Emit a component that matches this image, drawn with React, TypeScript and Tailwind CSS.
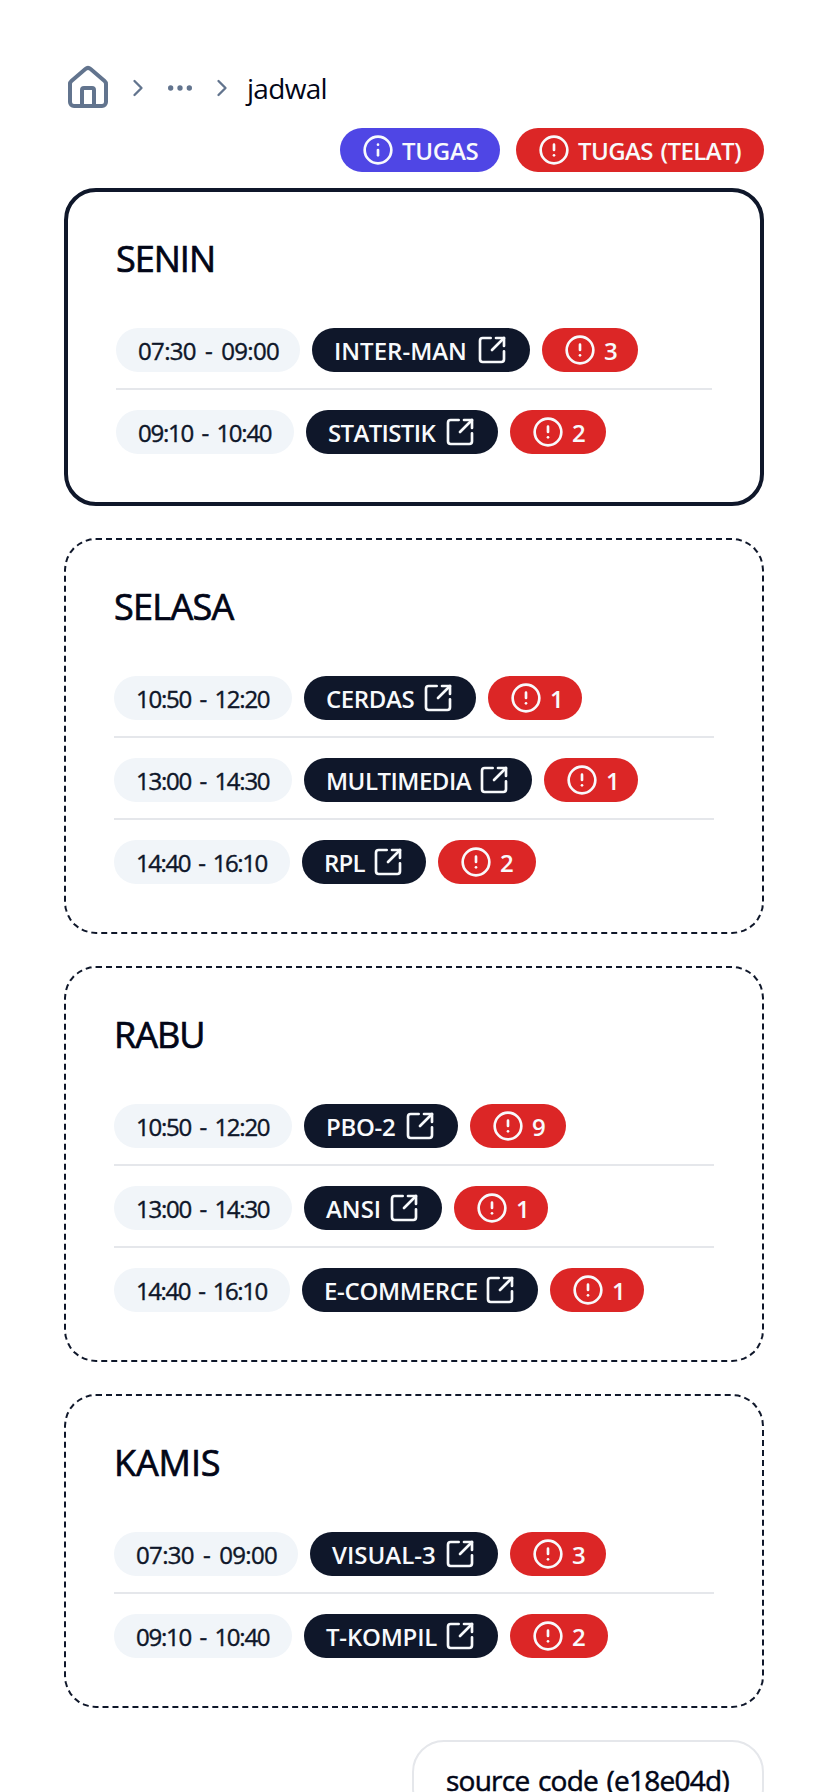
import { ChevronRight, CircleAlert, Ellipsis, House, Info, SquareArrowOutUpRight } from "lucide-react";

type Slot = { time: string; tw: string; name: string; nw: string; ns: string; late: number; lw: string };
type Day = { title: string; spacing: string; today?: boolean; slots: Slot[] };

const days: Day[] = [
  {
    title: "SENIN",
    spacing: "tracking-[-1px]",
    today: true,
    slots: [
      { time: "07:30 - 09:00", tw: "w-[184px] tracking-[-0.65px]", name: "INTER-MAN", nw: "w-[218px]", ns: "tracking-[0px]", late: 3, lw: "w-[96px]" },
      { time: "09:10 - 10:40", tw: "w-[178px] tracking-[-1.25px]", name: "STATISTIK", nw: "w-[192px]", ns: "tracking-[-0.65px]", late: 2, lw: "w-[96px]" },
    ],
  },
  {
    title: "SELASA",
    spacing: "tracking-[-0.7px]",
    slots: [
      { time: "10:50 - 12:20", tw: "w-[178px] tracking-[-1.25px]", name: "CERDAS", nw: "w-[172px]", ns: "tracking-[-0.4px]", late: 1, lw: "w-[94px]" },
      { time: "13:00 - 14:30", tw: "w-[178px] tracking-[-1.25px]", name: "MULTIMEDIA", nw: "w-[228px]", ns: "tracking-[-0.5px]", late: 1, lw: "w-[94px]" },
      { time: "14:40 - 16:10", tw: "w-[176px] tracking-[-1.45px]", name: "RPL", nw: "w-[124px]", ns: "tracking-[-0.8px]", late: 2, lw: "w-[98px]" },
    ],
  },
  {
    title: "RABU",
    spacing: "tracking-[-1px]",
    slots: [
      { time: "10:50 - 12:20", tw: "w-[178px] tracking-[-1.25px]", name: "PBO-2", nw: "w-[154px]", ns: "tracking-[-0.3px]", late: 9, lw: "w-[96px]" },
      { time: "13:00 - 14:30", tw: "w-[178px] tracking-[-1.25px]", name: "ANSI", nw: "w-[138px]", ns: "tracking-[0px]", late: 1, lw: "w-[94px]" },
      { time: "14:40 - 16:10", tw: "w-[176px] tracking-[-1.45px]", name: "E-COMMERCE", nw: "w-[236px]", ns: "tracking-[-0.3px]", late: 1, lw: "w-[94px]" },
    ],
  },
  {
    title: "KAMIS",
    spacing: "tracking-[-0.1px]",
    slots: [
      { time: "07:30 - 09:00", tw: "w-[184px] tracking-[-0.65px]", name: "VISUAL-3", nw: "w-[188px]", ns: "tracking-[0px]", late: 3, lw: "w-[96px]" },
      { time: "09:10 - 10:40", tw: "w-[178px] tracking-[-1.25px]", name: "T-KOMPIL", nw: "w-[194px]", ns: "tracking-[-0.2px]", late: 2, lw: "w-[98px]" },
    ],
  },
];

const pill = "flex h-11 shrink-0 items-center whitespace-nowrap rounded-full px-[22px] text-[24px] leading-8";

function SlotRow({ slot, last }: { slot: Slot; last: boolean }) {
  return (
    <li className={last ? "flex gap-3" : "mb-5 flex gap-3 border-b-2 border-[#e5e7eb] pb-4"}>
      <span className={`${pill} ${slot.tw} bg-[#f1f5f9] font-medium text-[#0f172a] [word-spacing:3.5px] [-webkit-text-stroke:0.4px]`}>
        <span className="pt-0.5">{slot.time}</span>
      </span>
      <a className={`${pill} ${slot.nw} justify-between bg-[#0f172a] font-semibold text-slate-50`}>
        <span className={`pt-0.5 ${slot.ns}`}>{slot.name}</span>
        <SquareArrowOutUpRight size={32} strokeWidth={2} className="shrink-0" />
      </a>
      <span className={`${pill} ${slot.lw} gap-2 bg-[#dc2626] font-semibold text-slate-50`}>
        <CircleAlert size={32} strokeWidth={2} className="shrink-0" />
        <span className="pt-0.5">{slot.late}</span>
      </span>
    </li>
  );
}

export default function App() {
  return (
    <main className="flex h-[1792px] w-[828px] flex-col overflow-hidden bg-white px-16 pt-16 font-['Open_Sans','Noto_Sans',sans-serif] text-[#020617]">
      <nav className="flex h-12 shrink-0 items-center gap-3 text-slate-500">
        <House size={48} />
        <ChevronRight size={28} />
        <Ellipsis size={32} />
        <ChevronRight size={28} />
        <span className="-ml-px text-[28px] leading-10 tracking-[-0.7px] text-[#020617]">jadwal</span>
      </nav>
      <div className="mt-4 flex shrink-0 justify-end gap-4">
        <span className={`${pill} w-[160px] gap-2 bg-[#4f46e5] font-semibold text-slate-50`}>
          <Info size={32} strokeWidth={2} className="shrink-0" />
          <span className="pt-0.5 tracking-[-0.3px]">TUGAS</span>
        </span>
        <span className={`${pill} w-[248px] gap-2 bg-[#dc2626] font-semibold text-slate-50`}>
          <CircleAlert size={32} strokeWidth={2} className="shrink-0" />
          <span className="pt-0.5 tracking-[-0.6px] [word-spacing:2px]">TUGAS (TELAT)</span>
        </span>
      </div>
      <div className="mt-4 flex shrink-0 flex-col gap-8">
        {days.map((day) => (
          <section
            key={day.title}
            className={`rounded-[32px] border-[#0f172a] p-12 ${day.today ? "border-4" : "border-2 border-dashed"}`}
          >
            <h2 className={`h-[88px] text-[36px] leading-[38px] font-medium [-webkit-text-stroke:0.7px] ${day.spacing}`}>
              {day.title}
            </h2>
            <ul>
              {day.slots.map((slot, i) => (
                <SlotRow key={slot.time} slot={slot} last={i === day.slots.length - 1} />
              ))}
            </ul>
          </section>
        ))}
      </div>
      <footer className="mt-8 flex h-20 w-[352px] shrink-0 items-center self-end rounded-[32px] border-2 border-[#e5e7eb] px-8 text-[28px] font-medium tracking-[-0.75px] whitespace-nowrap [word-spacing:2px] [-webkit-text-stroke:0.5px]">
        source code (e18e04d)
      </footer>
    </main>
  );
}
